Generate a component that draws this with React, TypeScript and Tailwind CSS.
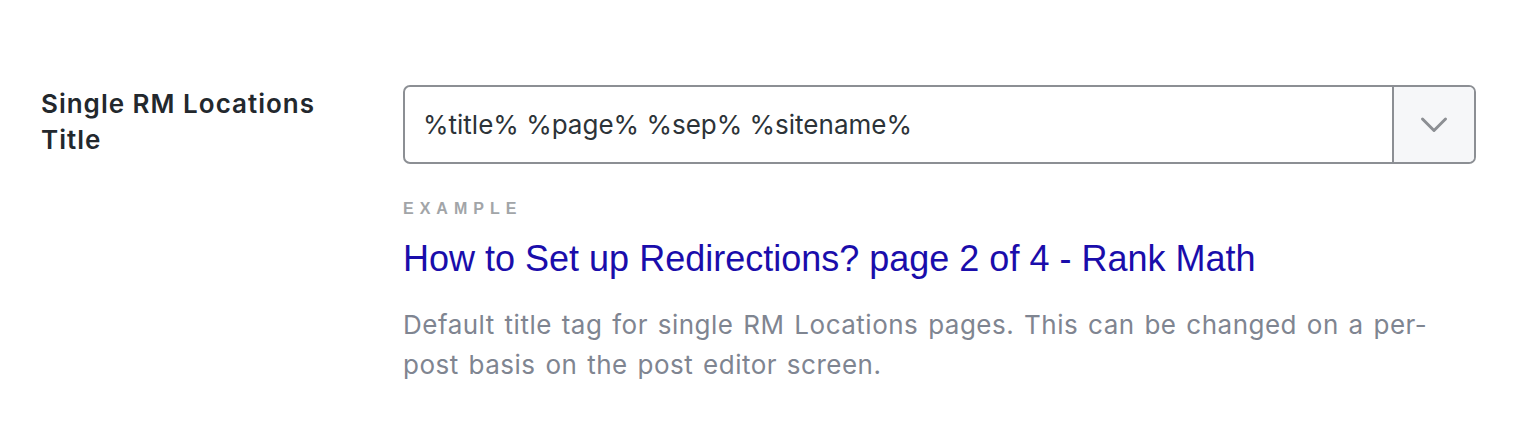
import React from "react";

export default function App() {
  return (
    <div className="w-[1514px] h-[423px] bg-white" style={{ fontFamily: "Inter, 'Noto Sans', sans-serif" }}>
      <div className="flex pt-[85px] pl-[41px] pr-[38px]">
        <div className="w-[362px] shrink-0 mt-[1px]">
          <div className="text-[26px] leading-[36px] font-semibold tracking-[1px] text-[#23282d]">
            Single RM Locations
            <br />
            Title
          </div>
        </div>
        <div className="flex-1 flex flex-col">
          <div className="flex h-[79px] border-2 border-[#8c8f94] rounded-[7px] overflow-hidden">
            <div className="flex-1 flex items-center pl-[18px] text-[26px] text-[#2c3338]">
              %title% %page% %sep% %sitename%
            </div>
            <div className="w-[82px] border-l-2 border-[#8c8f94] bg-[#f6f7f9] flex items-center justify-center">
              <svg width="28" height="18" viewBox="0 0 28 18" fill="none">
                <path d="M2.5 3 L14 14.5 L25.5 3" stroke="#8c8f94" strokeWidth="3" strokeLinecap="round" strokeLinejoin="round" />
              </svg>
            </div>
          </div>
          <div className="mt-[35px] text-[16px] leading-[20px] font-bold tracking-[6px] text-[#a2a5a8]" style={{ fontFamily: "'Liberation Sans', Arial, sans-serif" }}>
            EXAMPLE
          </div>
          <div className="mt-[18px] text-[36px] leading-[44px] text-[#1a0dab]" style={{ fontFamily: "'Liberation Sans', Arial, sans-serif" }}>
            How to Set up Redirections? page 2 of 4 - Rank Math
          </div>
          <div className="mt-[24px] text-[26px] leading-[40px] tracking-[0.5px] [word-spacing:2px] text-[#7f8591] max-w-[1073px]">
            Default title tag for single RM Locations pages. This can be changed on a per-post basis on the post editor screen.
          </div>
        </div>
      </div>
    </div>
  );
}
